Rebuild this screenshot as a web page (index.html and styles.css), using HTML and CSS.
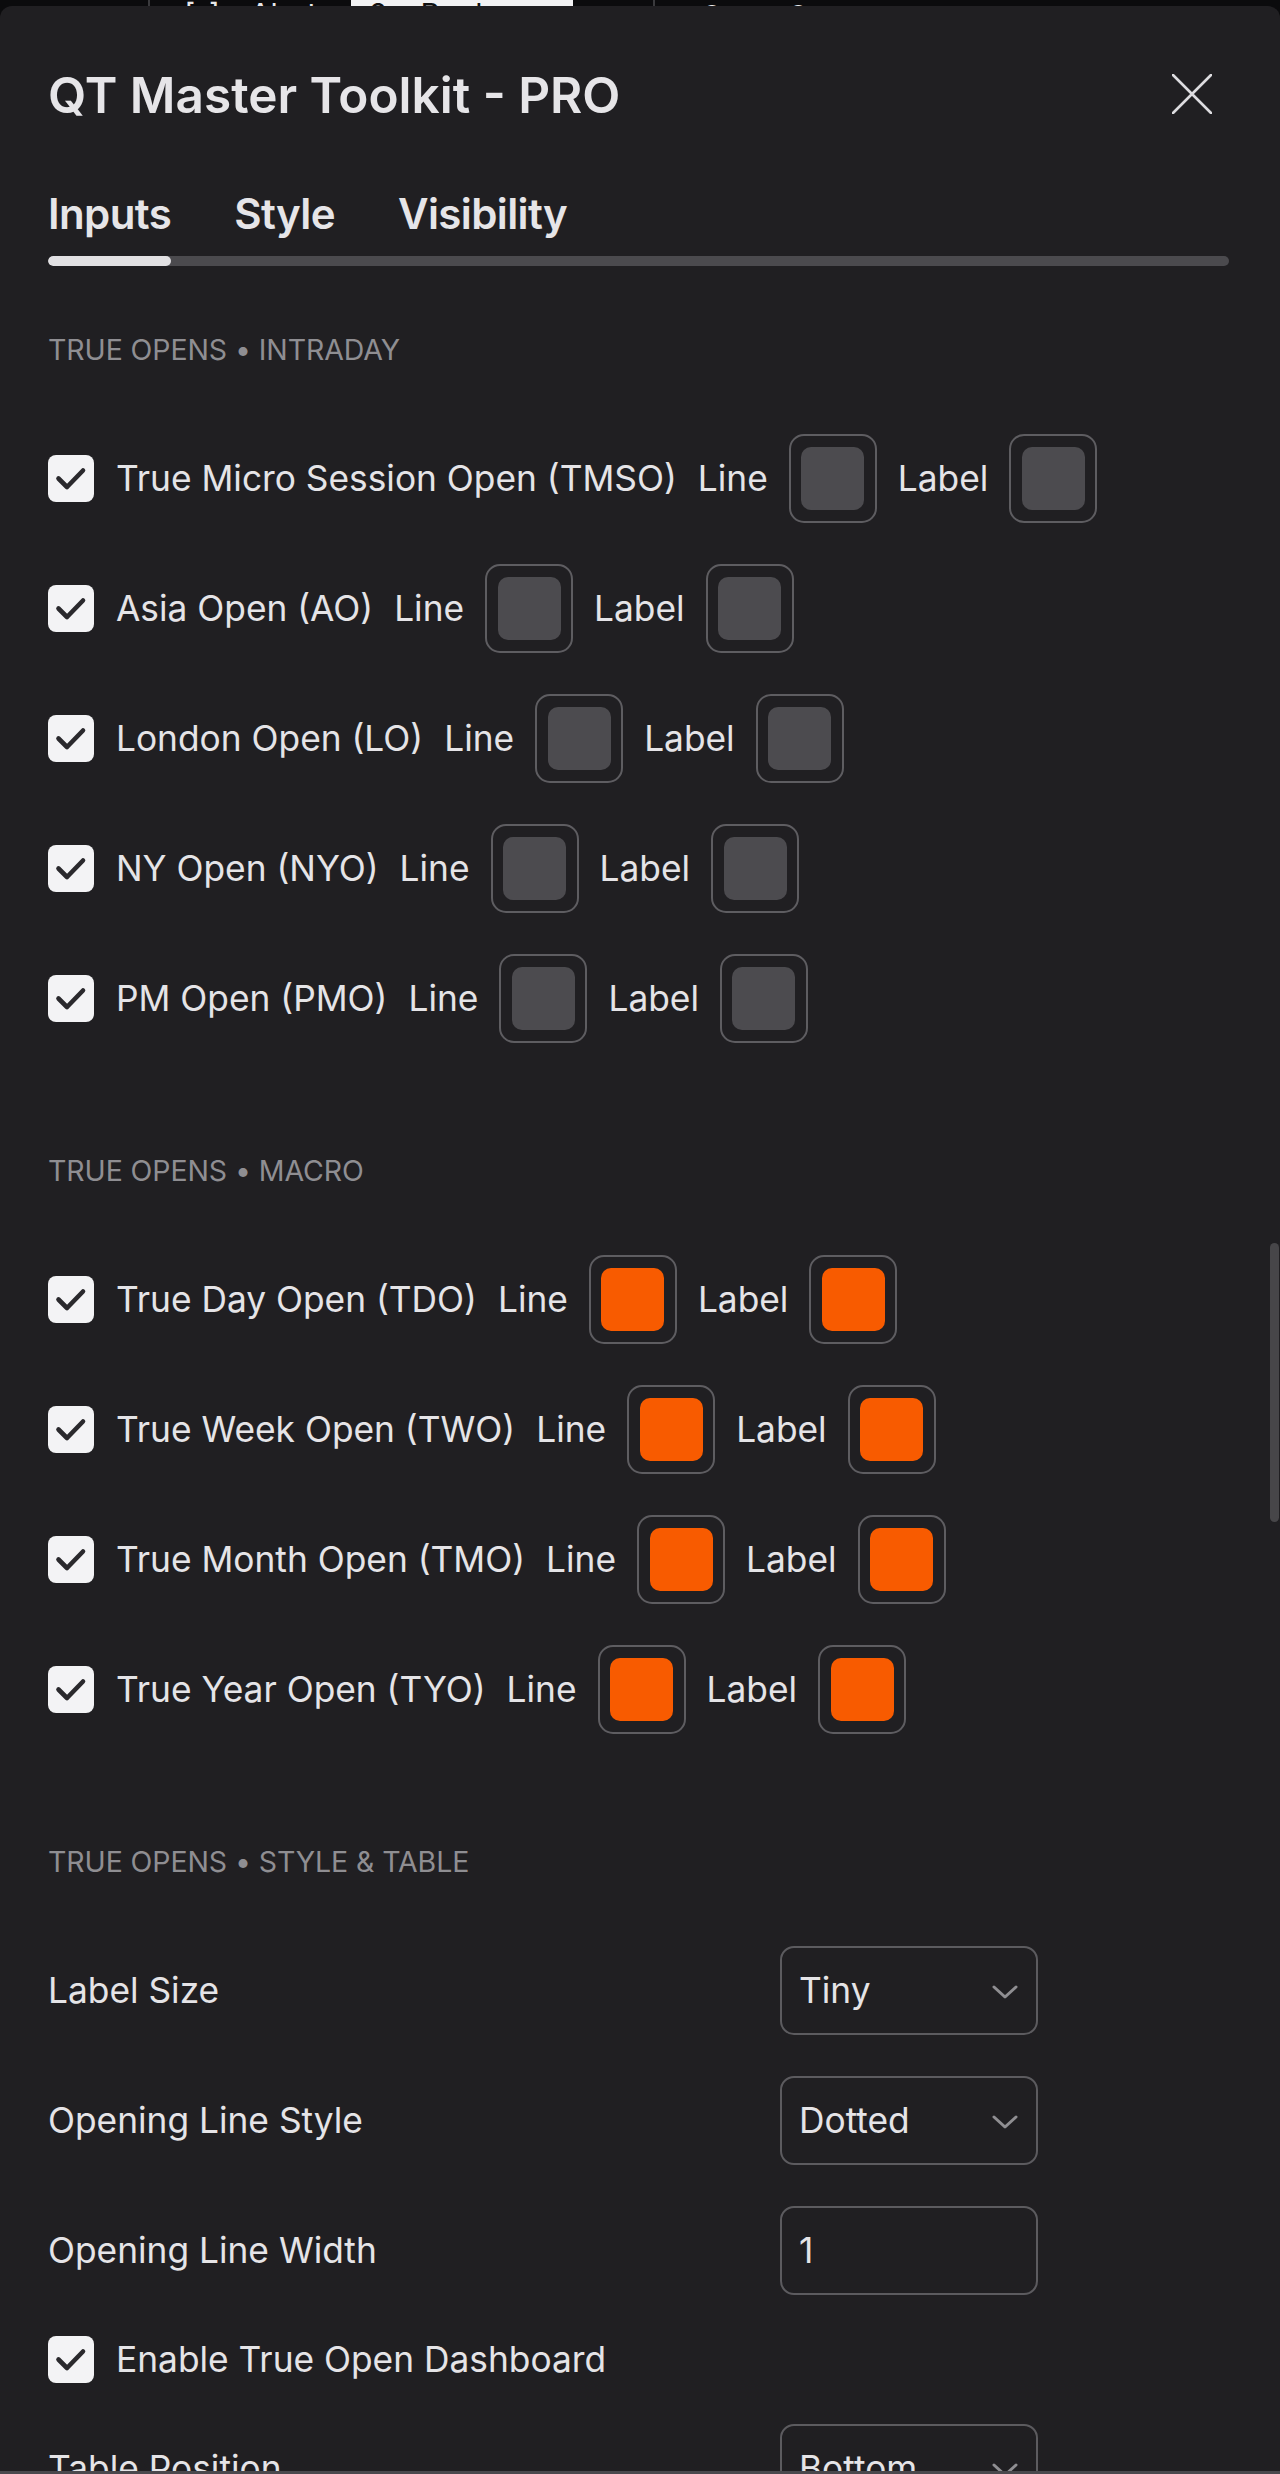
FILE: index.html
```html
<!DOCTYPE html>
<html lang="en">
<head>
<meta charset="utf-8">
<title>QT Master Toolkit - PRO</title>
<link rel="stylesheet" href="styles.css">
</head>
<body>
<div class="topbar">
  <div class="tb-items">
    <span class="tb-glyph tb-a">✓</span>
    <span class="tb-glyph tb-b">==</span>
    <span class="tb-sep tb-c"></span>
    <span class="tb-glyph tb-d">[-]</span>
    <span class="tb-text tb-e">Alert</span>
    <span class="tb-pill">2x&nbsp;&nbsp;Replay</span>
    <span class="tb-glyph tb-f">∨</span>
    <span class="tb-sep tb-g"></span>
    <span class="tb-glyph tb-h">↶</span>
    <span class="tb-glyph tb-i">↷</span>
  </div>
</div>
<div class="panel">
  <div class="head">
    <h1 class="title">QT Master Toolkit - PRO</h1>
    <button class="close" aria-label="Close">
      <svg width="40" height="40" viewBox="0 0 40 40"><path d="M1 1 L39 39 M39 1 L1 39" stroke="#dddce0" stroke-width="2.6" stroke-linecap="round" fill="none"/></svg>
    </button>
  </div>
  <div class="tabs">
    <span class="tab active">Inputs</span>
    <span class="tab">Style</span>
    <span class="tab">Visibility</span>
  </div>
  <div class="track"><div class="track-active"></div></div>

  <section class="section first">
    <div class="sec-title">TRUE OPENS • INTRADAY</div>
    <div class="rows">
      <div class="row">
        <span class="cb"><svg width="46" height="46" viewBox="0 0 46 46"><polyline points="10.5,22.5 19,31 35,14.5" fill="none" stroke="#2a292d" stroke-width="4.6" stroke-linecap="round" stroke-linejoin="round"/></svg></span>
        <span class="lbl">True Micro Session Open (TMSO)</span>
        <span class="lbl">Line</span><span class="sw"><span class="sw-in gray"></span></span>
        <span class="lbl">Label</span><span class="sw"><span class="sw-in gray"></span></span>
      </div>
      <div class="row">
        <span class="cb"><svg width="46" height="46" viewBox="0 0 46 46"><polyline points="10.5,22.5 19,31 35,14.5" fill="none" stroke="#2a292d" stroke-width="4.6" stroke-linecap="round" stroke-linejoin="round"/></svg></span>
        <span class="lbl">Asia Open (AO)</span>
        <span class="lbl">Line</span><span class="sw"><span class="sw-in gray"></span></span>
        <span class="lbl">Label</span><span class="sw"><span class="sw-in gray"></span></span>
      </div>
      <div class="row">
        <span class="cb"><svg width="46" height="46" viewBox="0 0 46 46"><polyline points="10.5,22.5 19,31 35,14.5" fill="none" stroke="#2a292d" stroke-width="4.6" stroke-linecap="round" stroke-linejoin="round"/></svg></span>
        <span class="lbl">London Open (LO)</span>
        <span class="lbl">Line</span><span class="sw"><span class="sw-in gray"></span></span>
        <span class="lbl">Label</span><span class="sw"><span class="sw-in gray"></span></span>
      </div>
      <div class="row">
        <span class="cb"><svg width="46" height="46" viewBox="0 0 46 46"><polyline points="10.5,22.5 19,31 35,14.5" fill="none" stroke="#2a292d" stroke-width="4.6" stroke-linecap="round" stroke-linejoin="round"/></svg></span>
        <span class="lbl">NY Open (NYO)</span>
        <span class="lbl">Line</span><span class="sw"><span class="sw-in gray"></span></span>
        <span class="lbl">Label</span><span class="sw"><span class="sw-in gray"></span></span>
      </div>
      <div class="row">
        <span class="cb"><svg width="46" height="46" viewBox="0 0 46 46"><polyline points="10.5,22.5 19,31 35,14.5" fill="none" stroke="#2a292d" stroke-width="4.6" stroke-linecap="round" stroke-linejoin="round"/></svg></span>
        <span class="lbl">PM Open (PMO)</span>
        <span class="lbl">Line</span><span class="sw"><span class="sw-in gray"></span></span>
        <span class="lbl">Label</span><span class="sw"><span class="sw-in gray"></span></span>
      </div>
    </div>
  </section>

  <section class="section">
    <div class="sec-title">TRUE OPENS • MACRO</div>
    <div class="rows">
      <div class="row">
        <span class="cb"><svg width="46" height="46" viewBox="0 0 46 46"><polyline points="10.5,22.5 19,31 35,14.5" fill="none" stroke="#2a292d" stroke-width="4.6" stroke-linecap="round" stroke-linejoin="round"/></svg></span>
        <span class="lbl">True Day Open (TDO)</span>
        <span class="lbl">Line</span><span class="sw"><span class="sw-in orange"></span></span>
        <span class="lbl">Label</span><span class="sw"><span class="sw-in orange"></span></span>
      </div>
      <div class="row">
        <span class="cb"><svg width="46" height="46" viewBox="0 0 46 46"><polyline points="10.5,22.5 19,31 35,14.5" fill="none" stroke="#2a292d" stroke-width="4.6" stroke-linecap="round" stroke-linejoin="round"/></svg></span>
        <span class="lbl">True Week Open (TWO)</span>
        <span class="lbl">Line</span><span class="sw"><span class="sw-in orange"></span></span>
        <span class="lbl">Label</span><span class="sw"><span class="sw-in orange"></span></span>
      </div>
      <div class="row">
        <span class="cb"><svg width="46" height="46" viewBox="0 0 46 46"><polyline points="10.5,22.5 19,31 35,14.5" fill="none" stroke="#2a292d" stroke-width="4.6" stroke-linecap="round" stroke-linejoin="round"/></svg></span>
        <span class="lbl">True Month Open (TMO)</span>
        <span class="lbl">Line</span><span class="sw"><span class="sw-in orange"></span></span>
        <span class="lbl">Label</span><span class="sw"><span class="sw-in orange"></span></span>
      </div>
      <div class="row">
        <span class="cb"><svg width="46" height="46" viewBox="0 0 46 46"><polyline points="10.5,22.5 19,31 35,14.5" fill="none" stroke="#2a292d" stroke-width="4.6" stroke-linecap="round" stroke-linejoin="round"/></svg></span>
        <span class="lbl">True Year Open (TYO)</span>
        <span class="lbl">Line</span><span class="sw"><span class="sw-in orange"></span></span>
        <span class="lbl">Label</span><span class="sw"><span class="sw-in orange"></span></span>
      </div>
    </div>
  </section>

  <section class="section">
    <div class="sec-title">TRUE OPENS • STYLE &amp; TABLE</div>
    <div class="rows">
      <div class="field">
        <span class="lbl">Label Size</span>
        <span class="select"><span class="val">Tiny</span><svg class="chev" width="26" height="14" viewBox="0 0 26 14"><polyline points="2,2 13,12 24,2" fill="none" stroke="#8f8e92" stroke-width="3" stroke-linecap="round" stroke-linejoin="round"/></svg></span>
      </div>
      <div class="field">
        <span class="lbl">Opening Line Style</span>
        <span class="select"><span class="val">Dotted</span><svg class="chev" width="26" height="14" viewBox="0 0 26 14"><polyline points="2,2 13,12 24,2" fill="none" stroke="#8f8e92" stroke-width="3" stroke-linecap="round" stroke-linejoin="round"/></svg></span>
      </div>
      <div class="field">
        <span class="lbl">Opening Line Width</span>
        <span class="select"><span class="val">1</span></span>
      </div>
      <div class="row short">
        <span class="cb"><svg width="46" height="46" viewBox="0 0 46 46"><polyline points="10.5,22.5 19,31 35,14.5" fill="none" stroke="#2a292d" stroke-width="4.6" stroke-linecap="round" stroke-linejoin="round"/></svg></span>
        <span class="lbl">Enable True Open Dashboard</span>
      </div>
      <div class="field">
        <span class="lbl">Table Position</span>
        <span class="select"><span class="val">Bottom</span><svg class="chev" width="26" height="14" viewBox="0 0 26 14"><polyline points="2,2 13,12 24,2" fill="none" stroke="#8f8e92" stroke-width="3" stroke-linecap="round" stroke-linejoin="round"/></svg></span>
      </div>
    </div>
  </section>

  <div class="scroll-thumb"></div>
</div>
<div class="bottom-edge"></div>
</body>
</html>
```

FILE: styles.css
```css
* { box-sizing: border-box; }
html, body { margin: 0; padding: 0; }
body {
  background: #0b0b0d;
  font-family: Inter, "Noto Sans", sans-serif;
  color: #e5e4e7;
  height: 2474px;
  overflow: hidden;
}

.topbar {
  height: 6px;
  overflow: hidden;
  background: #0b0b0d;
}
.tb-items {
  position: relative;
  height: 6px;
  display: flex;
  align-items: flex-end;
}
.tb-glyph, .tb-text, .tb-pill {
  font-size: 30px;
  line-height: 30px;
  color: #e8e8ea;
  margin-bottom: -23px;
  white-space: nowrap;
}
.tb-sep { width: 2px; height: 6px; background: #3a3a3d; }
.tb-a { margin-left: -6px; }
.tb-b { margin-left: 52px; letter-spacing: 2px; }
.tb-c { margin-left: 32px; }
.tb-d { margin-left: 34px; }
.tb-e { margin-left: 30px; }
.tb-pill { margin-left: 34px; background: #f2f2f4; color: #111; width: 222px; padding-left: 18px; }
.tb-f { margin-left: 28px; }
.tb-g { margin-left: 30px; }
.tb-h { margin-left: 42px; }
.tb-i { margin-left: 66px; }

.panel {
  position: relative;
  background: #201f22;
  border-radius: 12px 12px 0 0;
  height: 2468px;
  overflow: hidden;
  padding: 59px 0 0 48px;
}

.head {
  display: flex;
  align-items: center;
  justify-content: space-between;
  padding-right: 68px;
}
.title {
  margin: 0;
  font-size: 49.5px;
  line-height: 60px;
  font-weight: 600;
  letter-spacing: 0;
  color: #e6e5e8;
}
.close {
  background: none;
  border: 0;
  padding: 0;
  width: 40px;
  height: 40px;
  display: block;
  margin-top: -2px;
}
.close svg { display: block; }

.tabs {
  display: flex;
  gap: 63px;
  margin-top: 64px;
}
.tab {
  font-size: 42px;
  line-height: 50px;
  font-weight: 600;
  letter-spacing: -0.6px;
  color: #e6e5e8;
}

.track {
  margin-top: 17px;
  width: 1181px;
  height: 10px;
  border-radius: 5px;
  background: #4b4a4e;
  overflow: hidden;
}
.track-active {
  width: 123px;
  height: 10px;
  border-radius: 5px;
  background: #e1e0e3;
}

.section { margin-top: 110px; }
.section.first { margin-top: 66px; }

.sec-title {
  font-size: 28.5px;
  line-height: 36px;
  color: #8f8e92;
  letter-spacing: -0.1px;
  margin-bottom: 66px;
}

.rows {
  display: flex;
  flex-direction: column;
  gap: 41px;
}

.row {
  display: flex;
  align-items: center;
  gap: 21px;
  height: 89px;
}
.row.short { height: 47px; }

.cb {
  width: 46px;
  height: 47px;
  border-radius: 8px;
  background: #f3f3f5;
  display: flex;
  align-items: center;
  justify-content: center;
  margin-right: 1px;
  flex: none;
}
.cb svg { display: block; }

.lbl {
  font-size: 35.3px;
  line-height: 44px;
  color: #e5e4e7;
  letter-spacing: 0;
  white-space: nowrap;
}

.sw {
  width: 88px;
  height: 89px;
  border: 2px solid #5e5d61;
  border-radius: 15px;
  display: flex;
  align-items: center;
  justify-content: center;
  flex: none;
}
.sw-in {
  width: 63px;
  height: 63px;
  border-radius: 10px;
}
.sw-in.gray { background: #4c4b4f; }
.sw-in.orange { background: #f85b00; }

.field {
  display: grid;
  grid-template-columns: 732px 258px;
  align-items: center;
  height: 89px;
}
.select {
  height: 89px;
  border: 2px solid #5c5b5f;
  border-radius: 14px;
  display: flex;
  align-items: center;
  justify-content: space-between;
  padding: 0 18px 0 17px;
}
.val {
  font-size: 35.3px;
  line-height: 44px;
  color: #e5e4e7;
}
.chev { display: block; margin-top: 2px; }

.scroll-thumb {
  position: absolute;
  right: 1px;
  top: 1237px;
  width: 9px;
  height: 279px;
  border-radius: 5px;
  background: #474649;
}

.bottom-edge {
  position: fixed;
  left: 0;
  right: 0;
  bottom: 0;
  height: 3px;
  background: #4a494d;
}
```
